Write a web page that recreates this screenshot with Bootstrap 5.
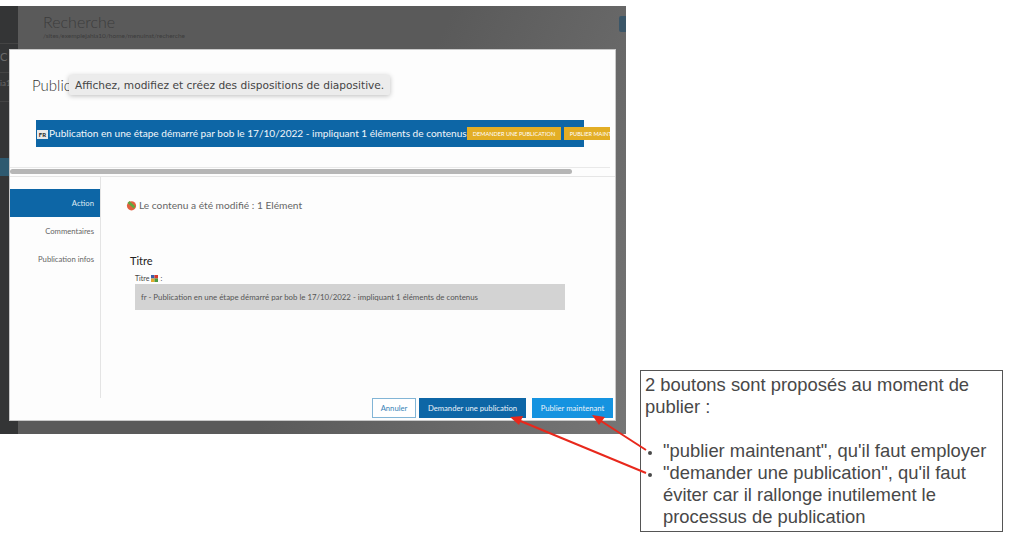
<!DOCTYPE html>
<html lang="fr">
<head>
<meta charset="utf-8">
<title>Publication</title>
<link href="https://cdn.jsdelivr.net/npm/bootstrap@5.3.0/dist/css/bootstrap.min.css" rel="stylesheet">
<style>
html,body{height:539px;overflow:hidden;background:#fff;}
body{position:relative;font-family:"Lato","Liberation Sans",sans-serif;}
.shot{width:626px;height:428px;margin-top:6px;background:linear-gradient(115deg,#5a5a5a 0,#5a5a5a 55%,#767676 100%);position:relative;overflow:hidden;}
.rail{width:18px;flex:none;background:#343536;position:relative;z-index:1;}
.rail-row{height:29px;border-bottom:1px solid #444;color:#6a6a6a;padding-left:0;}
.rail-first{height:38px;}
.rail-c{font-size:11px;line-height:26px;}
.rail-i{font-size:8px;line-height:20px;}
.rail-gap{height:56px;}
.rail-on{height:18px;background:#2e5a70;}
.bg-head{padding:8px 0 0 25px;color:#3c3c3c;line-height:1;}
.bg-title{font-size:16px;font-weight:300;margin-bottom:3px;}
.bg-path{font-size:6.5px;color:#3d3d3d;}
.bg-btn{position:absolute;right:0;top:10px;width:7px;height:16px;background:#3b5668;border-radius:2px 0 0 2px;}
.pop{position:absolute;left:9px;top:43px;width:607px;height:372px;background:#fdfdfd;border:1px solid #c9c9c9;z-index:2;display:flex;flex-direction:column;}
.pop-title{font-size:15px;color:#333;font-weight:300;padding:25px 0 0 22px;height:70px;line-height:20px;white-space:nowrap;}
.bar-wrap{width:600px;overflow:hidden;margin-bottom:20px;flex:none;}
.bluebar{margin-left:26px;width:548px;height:27px;background:#0d66a6;color:#f2f6fa;font-size:10.1px;display:flex;align-items:center;white-space:nowrap;overflow:visible;padding-left:1px;}
.flag{width:11px;height:9px;background:#e9e9e9;color:#222;font-size:6px;font-weight:700;line-height:9px;text-align:center;margin-right:1px;margin-top:2px;flex:none;}
.ybtn{background:#e3ae25;color:#fff;font-size:5.6px;text-transform:uppercase;height:13px;line-height:13px;padding:0 6px;flex:none;width:94px;text-align:center;}
.ybtn2{margin-left:3px;width:70px;text-align:left;}
.scroller{width:600px;height:9px;border-top:1px solid #e9e9e9;position:relative;flex:none;}
.thumb{position:absolute;left:0;top:1px;width:562px;height:5px;background:#b6b6b6;border-radius:3px;}
.pop-body{border-top:1px solid #e6e6e6;display:flex;height:222px;flex:none;}
.side{width:91px;flex:none;border-right:1px solid #e4e4e4;padding-top:12px;font-size:7.7px;color:#666;text-align:right;}
.side-item{height:28px;line-height:28px;padding-right:6px;}
.side-on{background:#0d66a6;color:#dfe9f2;}
.main{padding:0;flex:1;color:#666;}
.changed{font-size:10.2px;padding:19px 0 0 25px;line-height:18px;display:flex;align-items:center;gap:2px;}
.sect{font-size:11px;color:#222;margin:40px 0 0 29px;line-height:14px;}
.lab{font-size:7px;color:#444;margin:5px 0 0 34px;line-height:10px;display:flex;align-items:center;gap:2px;}
.valbox{margin:1px 0 0 34px;width:430px;height:26px;background:#d3d3d3;font-size:7.85px;color:#555;line-height:26px;padding-left:6px;}
.pop-foot{display:flex;justify-content:flex-end;gap:3px;padding-right:2px;}
.fbtn{height:20px;font-size:7.7px;line-height:18px;padding:0;border:1px solid #cfe3f2;color:#eaf2f8;text-align:center;border-radius:0;}
.f-a{width:44px;background:#fff;color:#3b85b8;border-color:#82b5d6;}
.f-b{width:107px;background:#0d66a6;border-color:#0d66a6;}
.f-c{width:81px;background:#1593e0;border-color:#1593e0;margin-left:3px;}
.tip{position:absolute;left:69px;top:69px;width:321px;height:20px;background:#ececec;border-radius:2px;box-shadow:0 1px 5px rgba(0,0,0,.25);font-family:"DejaVu Sans",sans-serif;font-size:10.6px;line-height:20px;color:#444;padding-left:6px;z-index:3;white-space:nowrap;}
.note{position:absolute;left:640px;top:370px;width:363px;height:162px;border:1px solid #555;background:#fff;font-family:"Liberation Sans",sans-serif;font-size:18.4px;line-height:22px;color:#484848;padding:3px 4px;z-index:4;}
.note p{margin:0 0 22px;}
.note ul{margin:0;padding:0 0 0 18px;}
.note li::marker{font-size:13px;}
.arrows{position:absolute;left:0;top:0;z-index:5;pointer-events:none;}
</style>
</head>
<body>
<div class="shot d-flex">
  <div class="rail">
    <div class="rail-row rail-first"></div>
    <div class="rail-row rail-c">C</div>
    <div class="rail-row rail-i">ia1</div>
    <div class="rail-gap"></div>
    <div class="rail-on"></div>
  </div>
  <div class="bg-head flex-grow-1">
    <div class="bg-title">Recherche</div>
    <div class="bg-path">/sites/exemplejahia10/home/menuinst/recherche</div>
  </div>
  <div class="bg-btn"></div>
  <div class="pop">
    <div class="pop-title">Public</div>
    <div class="bar-wrap">
      <div class="bluebar">
        <span class="flag">FR</span>Publication en une étape démarré par bob le 17/10/2022 - impliquant 1 éléments de contenus<span class="ybtn">Demander une publication</span><span class="ybtn ybtn2">Publier maintenant</span>
      </div>
    </div>
    <div class="scroller"><div class="thumb"></div></div>
    <div class="pop-body">
      <div class="side">
        <div class="side-item side-on">Action</div>
        <div class="side-item">Commentaires</div>
        <div class="side-item">Publication infos</div>
      </div>
      <div class="main">
        <div class="changed">
          <svg width="11" height="11" viewBox="0 0 11 11"><circle cx="5.5" cy="5.8" r="4.6" fill="#e2603f"/><path d="M2.5 2l6 5.5" stroke="#5fa83f" stroke-width="2.6"/></svg>
          <span>Le contenu a été modifié : 1 Elément</span>
        </div>
        <div class="sect">Titre</div>
        <div class="lab">
          <span>Titre</span>
          <svg width="7" height="7" viewBox="0 0 7 7"><rect width="3.5" height="3.5" fill="#3b5fa8"/><rect x="3.5" width="3.5" height="3.5" fill="#d8382c"/><rect y="3.5" width="3.5" height="3.5" fill="#e3a92b"/><rect x="3.5" y="3.5" width="3.5" height="3.5" fill="#4a9a3f"/></svg>
          <span>:</span>
        </div>
        <div class="valbox">fr - Publication en une étape démarré par bob le 17/10/2022 - impliquant 1 éléments de contenus</div>
      </div>
    </div>
    <div class="pop-foot">
      <button type="button" class="btn fbtn f-a">Annuler</button>
      <button type="button" class="btn fbtn f-b">Demander une publication</button>
      <button type="button" class="btn fbtn f-c">Publier maintenant</button>
    </div>
  </div>
  <div class="tip">Affichez, modifiez et créez des dispositions de diapositive.</div>
</div>
<div class="note">
  <p>2 boutons sont proposés au moment de publier :</p>
  <ul>
    <li>"publier maintenant", qu'il faut employer</li>
    <li>"demander une publication", qu'il faut éviter car il rallonge inutilement le processus de publication</li>
  </ul>
</div>
<svg class="arrows" width="1020" height="539" viewBox="0 0 1020 539">
  <path d="M646 450 L598 419" stroke="#e8281c" stroke-width="2" fill="none"/>
  <path d="M592 415 L605 417 L599 425 Z" fill="#e8281c"/>
  <path d="M646 473 L518 420" stroke="#e8281c" stroke-width="2" fill="none"/>
  <path d="M510 417 L523 416 L519 425 Z" fill="#e8281c"/>
</svg>
</body>
</html>
